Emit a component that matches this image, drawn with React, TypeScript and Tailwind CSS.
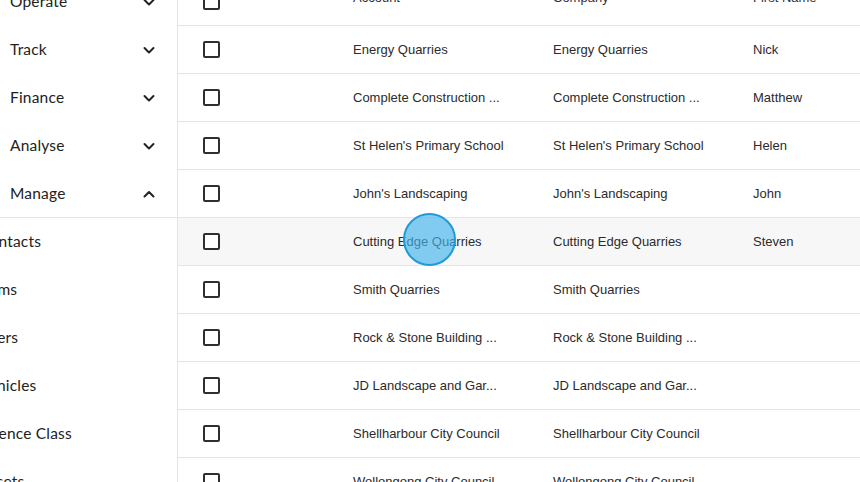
import React from "react";

const navItems = [
  { label: "Operate", open: false },
  { label: "Track", open: false },
  { label: "Finance", open: false },
  { label: "Analyse", open: false },
  { label: "Manage", open: true },
];

const subItems = ["Contacts", "Items", "Users", "Vehicles", "Licence Class", "Assets"];

const rows = [
  { account: "Energy Quarries", company: "Energy Quarries", first: "Nick" },
  { account: "Complete Construction ...", company: "Complete Construction ...", first: "Matthew" },
  { account: "St Helen's Primary School", company: "St Helen's Primary School", first: "Helen" },
  { account: "John's Landscaping", company: "John's Landscaping", first: "John" },
  { account: "Cutting Edge Quarries", company: "Cutting Edge Quarries", first: "Steven", hover: true },
  { account: "Smith Quarries", company: "Smith Quarries", first: "" },
  { account: "Rock & Stone Building ...", company: "Rock & Stone Building ...", first: "" },
  { account: "JD Landscape and Gar...", company: "JD Landscape and Gar...", first: "" },
  { account: "Shellharbour City Council", company: "Shellharbour City Council", first: "" },
  { account: "Wollongong City Council", company: "Wollongong City Council", first: "" },
];

const Chevron = ({ up }: { up?: boolean }) => (
  <svg width="14" height="14" viewBox="0 0 14 14" fill="none">
    <polyline
      points={up ? "2.5,9.5 7,5 11.5,9.5" : "2.5,5 7,9.5 11.5,5"}
      stroke="#222"
      strokeWidth="2"
      strokeLinecap="round"
      strokeLinejoin="round"
    />
  </svg>
);

const Checkbox = () => (
  <div className="w-[17px] h-[17px] border-2 border-[#2f2f2f] rounded-[2px] bg-white" />
);

export default function App() {
  return (
    <div className="relative w-[860px] h-[482px] overflow-hidden bg-white flex">
      <aside
        className="w-[178px] shrink-0 border-r border-[#e4e4e4] text-[#222] text-[15.5px]"
        style={{ fontFamily: "Lato, 'Open Sans', sans-serif" }}
      >
        <div className="-mt-[22px]">
          {navItems.map((item) => (
            <div
              key={item.label}
              className={`h-[48px] flex items-center justify-between pl-[10px] pr-[21px] ${item.open ? "border-b border-[#e4e4e4]" : ""}`}
            >
              <span className="tracking-[0.2px]">{item.label}</span>
              <Chevron up={item.open} />
            </div>
          ))}
          {subItems.map((s) => (
            <div key={s} className="h-[48px] flex items-center">
              <span className="-ml-[21px] whitespace-nowrap tracking-[0.2px]">{s}</span>
            </div>
          ))}
        </div>
      </aside>

      <main
        className="flex-1 text-[13px] text-[#2b2b2b]"
        style={{ fontFamily: "'Liberation Sans', Arial, sans-serif" }}
      >
        <div className="-mt-[22px]">
          <div className="h-[48px] flex items-center border-b border-[#e4e4e4] text-[#333]">
            <div className="w-[155px] pl-[25px]">
              <Checkbox />
            </div>
            <div className="w-[200px] pl-[20px] pb-[8px]">Account</div>
            <div className="w-[200px] pl-[20px] pb-[8px]">Company</div>
            <div className="flex-1 pl-[20px] pb-[8px]">First Name</div>
          </div>
          {rows.map((r) => (
            <div
              key={r.account}
              className={`h-[48px] flex items-center border-b border-[#e4e4e4] ${r.hover ? "bg-[#f7f7f7]" : ""}`}
            >
              <div className="w-[155px] pl-[25px]">
                <Checkbox />
              </div>
              <div className="w-[200px] pl-[20px] whitespace-nowrap">{r.account}</div>
              <div className="w-[200px] pl-[20px] whitespace-nowrap">{r.company}</div>
              <div className="flex-1 pl-[20px]">{r.first}</div>
            </div>
          ))}
        </div>
      </main>

      <div className="absolute left-[403px] top-[213px] w-[53px] h-[53px] rounded-full border-2 border-[#1f9bd7] bg-[#43b4ec]/65" />
    </div>
  );
}
